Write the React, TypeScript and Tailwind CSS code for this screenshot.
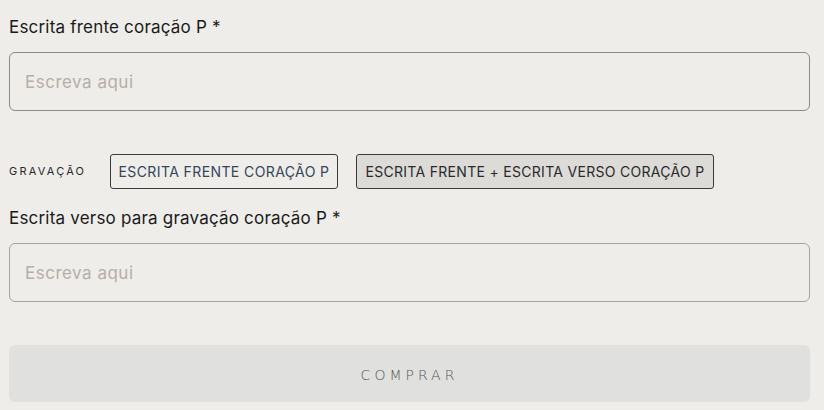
export default function App() {
  return (
    <div className="min-h-[410px] w-[824px] bg-[#eeede9] px-[9px] pt-[15px] font-['Inter','Liberation_Sans',sans-serif] text-[#1a1a1a]">
      <label className="block">
        <span className="block text-[17px] leading-[24px] tracking-[0.2px]">Escrita frente coração P *</span>
        <input
          placeholder="Escreva aqui"
          className="mt-[13px] h-[59px] w-[801px] rounded-[6px] border border-[#8b8a87] bg-transparent px-[15px] text-[17px] tracking-[0.5px] outline-none placeholder:text-[#b7aea7]"
        />
      </label>

      <div className="mt-[43px] flex items-center">
        <span className="w-[101px] text-[11px] tracking-[2.2px] text-[#2a2a2a]">GRAVAÇÃO</span>
        <button
          type="button"
          className="h-[35px] w-[228px] rounded-[3px] border border-[#3a3a3a] text-[14px] tracking-[0.4px] text-[#34465a]"
        >
          ESCRITA FRENTE CORAÇÃO P
        </button>
        <button
          type="button"
          className="ml-[18px] h-[35px] w-[358px] rounded-[3px] border border-[#3a3a3a] bg-[#dcdbd7] text-[14px] tracking-[0.3px] text-[#2a2a2a]"
        >
          ESCRITA FRENTE + ESCRITA VERSO CORAÇÃO P
        </button>
      </div>

      <label className="mt-[17px] block">
        <span className="block text-[17px] leading-[24px] tracking-[0.2px]">Escrita verso para gravação coração P *</span>
        <input
          placeholder="Escreva aqui"
          className="mt-[13px] h-[59px] w-[801px] rounded-[6px] border border-[#a5a4a1] bg-transparent px-[15px] text-[17px] tracking-[0.5px] outline-none placeholder:text-[#b7aea7]"
        />
      </label>

      <button
        type="button"
        className="mt-[43px] h-[57px] w-[801px] rounded-[6px] bg-[#e0e0de] pt-[3px] font-['DejaVu_Sans',sans-serif] text-[14px] font-light tracking-[4px] text-[#555]"
      >
        COMPRAR
      </button>
    </div>
  );
}
